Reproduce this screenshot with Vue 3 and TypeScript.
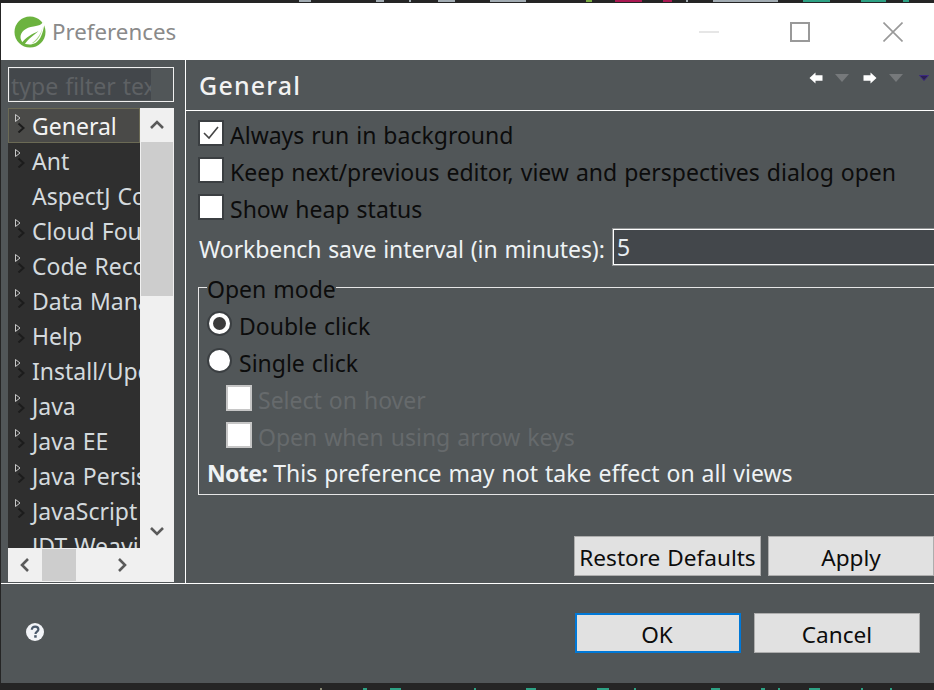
<script setup lang="ts">
const treeItems: { label: string; arrow: boolean; selected?: boolean }[] = [
  { label: 'General', arrow: true, selected: true },
  { label: 'Ant', arrow: true },
  { label: 'AspectJ Compiler', arrow: false },
  { label: 'Cloud Foundry', arrow: true },
  { label: 'Code Recommenders', arrow: true },
  { label: 'Data Management', arrow: true },
  { label: 'Help', arrow: true },
  { label: 'Install/Update', arrow: true },
  { label: 'Java', arrow: true },
  { label: 'Java EE', arrow: true },
  { label: 'Java Persistence', arrow: true },
  { label: 'JavaScript', arrow: true },
  { label: 'JDT Weaving', arrow: false },
]

// Fragments of the window behind the dialog that peek out above and below it: [start x, end x, colour]
type Bit = [number, number, string]
const toStyles = (bits: Bit[]) => {
  let cursor = 0
  return bits.map(([from, to, color]) => {
    const style = { marginLeft: `${from - cursor}px`, width: `${to - from}px`, background: color }
    cursor = to
    return style
  })
}
const light = '#b9c4cc'
const teal = '#2fb795'
const pink = '#c2185b'
const topBits = toStyles([
  [299, 311, light], [376, 384, light], [409, 411, light], [438, 455, light], [490, 526, light],
  [586, 592, '#8bc34a'], [615, 642, pink], [663, 672, pink], [686, 688, light], [713, 778, light],
  [803, 830, teal], [861, 886, teal], [903, 909, teal],
])
const bottomBits = toStyles([
  [320, 322, '#9a9a80'], [363, 367, teal], [390, 401, teal], [474, 476, teal], [526, 536, teal],
  [597, 609, teal], [634, 636, teal], [711, 720, teal], [761, 765, teal], [778, 780, teal],
  [809, 820, teal], [861, 863, teal], [890, 892, teal],
])
</script>

<template>
  <div class="screen">
    <div class="top-strip">
      <i v-for="(bit, i) in topBits" :key="i" class="bit" :style="bit"></i>
    </div>
    <div class="dialog">
      <header class="titlebar">
        <svg class="logo" width="33" height="32" viewBox="0 0 32 32">
          <circle cx="15.5" cy="16" r="15.5" fill="#6cb33f" />
          <path d="M30.5 1 C29 8 26 9.5 19 10.5 C11 11.5 6 16 6 21 C6 25 9 28.5 15 28.5 C24 28.5 29.5 20 30.5 1 Z" fill="#fff" />
          <path d="M7 27.5 C11 21 18 18 24 15 C19 19.5 14 22.5 10 28.5 Z" fill="#6cb33f" />
          <path d="M29 4 C28.5 13 26 21 17 27.5 C23 26 28 19 29 4 Z" fill="#a5d67f" />
        </svg>
        <span class="title">Preferences</span>
        <div class="window-controls">
          <span class="minimize"></span>
          <span class="maximize"></span>
          <svg class="close" width="20" height="20" viewBox="0 0 20 20">
            <path d="M0.5 0.5 L19.5 19.5 M19.5 0.5 L0.5 19.5" stroke="#999" stroke-width="1.6" fill="none" />
          </svg>
        </div>
      </header>

      <div class="main">
        <aside class="sidebar">
          <div class="filter"><span class="filter-fill"><span class="filter-text">type filter text</span></span></div>
          <div class="tree">
            <div class="tree-top">
              <ul class="tree-list">
                <li v-for="item in treeItems" :key="item.label" class="tree-row" :class="{ selected: item.selected }">
                  <svg v-if="item.arrow" class="twisty" width="12" height="19" viewBox="0 0 12 19">
                    <path d="M0.5 0.5 L5 4 L0.5 7.5 Z" fill="none" stroke="#c8c8c8" stroke-width="1" />
                    <path d="M3.5 9.5 L8.5 14 L3.5 18.5" fill="none" stroke="#1c1c1c" stroke-width="2" />
                  </svg>
                  <span class="tree-label">{{ item.label }}</span>
                </li>
              </ul>
              <div class="vscroll">
                <div class="scroll-btn">
                  <svg width="14" height="10" viewBox="0 0 14 10"><path d="M1 8 L7 2 L13 8" fill="none" stroke="#5a5a5a" stroke-width="2.6" /></svg>
                </div>
                <div class="vthumb"></div>
                <div class="vspace"></div>
                <div class="scroll-btn down">
                  <svg width="14" height="10" viewBox="0 0 14 10"><path d="M1 2 L7 8 L13 2" fill="none" stroke="#5a5a5a" stroke-width="2.6" /></svg>
                </div>
              </div>
            </div>
            <div class="hscroll">
              <div class="hbtn">
                <svg width="10" height="14" viewBox="0 0 10 14"><path d="M8 1 L2 7 L8 13" fill="none" stroke="#5a5a5a" stroke-width="2.6" /></svg>
              </div>
              <div class="hthumb"></div>
              <div class="hbtn right">
                <svg width="10" height="14" viewBox="0 0 10 14"><path d="M2 1 L8 7 L2 13" fill="none" stroke="#5a5a5a" stroke-width="2.6" /></svg>
              </div>
            </div>
          </div>
        </aside>

        <section class="pane">
          <div class="pane-head">
            <h1 class="pane-title">General</h1>
            <div class="nav-icons">
              <svg width="14" height="12" viewBox="0 0 14 12"><path d="M0.5 6 L6.5 0.5 L6.5 3.2 L13.5 3.2 L13.5 8.8 L6.5 8.8 L6.5 11.5 Z" fill="#fff" /></svg>
              <svg class="tri" width="14" height="8" viewBox="0 0 14 8"><path d="M0 0 H14 L7 8 Z" fill="#76797b" /></svg>
              <svg class="next" width="14" height="12" viewBox="0 0 14 12"><path d="M13.5 6 L7.5 0.5 L7.5 3.2 L0.5 3.2 L0.5 8.8 L7.5 8.8 L7.5 11.5 Z" fill="#fff" /></svg>
              <svg class="tri" width="14" height="8" viewBox="0 0 14 8"><path d="M0 0 H14 L7 8 Z" fill="#76797b" /></svg>
              <svg class="menu" width="10" height="6" viewBox="0 0 10 6"><path d="M0.5 0.5 H9.5 L5 5.5 Z" fill="#2b2050" stroke="#3d2a80" /></svg>
            </div>
          </div>

          <div class="pane-body">
            <label class="check-row">
              <span class="box">
                <svg width="20" height="20" viewBox="0 0 20 20"><path d="M3 10 L8 15 L17 4" fill="none" stroke="#454545" stroke-width="1.6" /></svg>
              </span>
              <span class="row-text">Always run in background</span>
            </label>
            <label class="check-row"><span class="box"></span><span class="row-text">Keep next/previous editor, view and perspectives dialog open</span></label>
            <label class="check-row"><span class="box"></span><span class="row-text">Show heap status</span></label>

            <div class="interval">
              <span class="interval-label">Workbench save interval (in minutes):</span>
              <div class="interval-input">5</div>
            </div>

            <fieldset class="group">
              <legend class="legend">Open mode</legend>
              <label class="radio-row"><span class="radio on"></span><span class="row-text">Double click</span></label>
              <label class="radio-row"><span class="radio"></span><span class="row-text">Single click</span></label>
              <label class="sub-row"><span class="box disabled"></span><span class="row-text">Select on hover</span></label>
              <label class="sub-row"><span class="box disabled"></span><span class="row-text">Open when using arrow keys</span></label>
              <p class="note"><b>Note:</b> This preference may not take effect on all views</p>
            </fieldset>

            <div class="pane-actions">
              <button class="btn restore">Restore Defaults</button>
              <button class="btn apply">Apply</button>
            </div>
          </div>
        </section>
      </div>

      <footer class="footer">
        <svg class="help" width="18" height="18" viewBox="0 0 18 18">
          <circle cx="9" cy="9" r="9" fill="#f2f4f8" />
          <path d="M5.8 6.8 C5.8 4.6 7.4 3.6 9.1 3.6 C11 3.6 12.4 4.7 12.4 6.5 C12.4 8.6 9.5 8.8 9.5 11" fill="none" stroke="#4b5a6c" stroke-width="2.2" />
          <rect x="8.2" y="12.2" width="2.5" height="2.5" fill="#4b5a6c" />
        </svg>
        <div class="footer-actions">
          <button class="btn ok">OK</button>
          <button class="btn cancel">Cancel</button>
        </div>
      </footer>
    </div>
    <div class="bottom-strip">
      <i v-for="(bit, i) in bottomBits" :key="i" class="bit" :style="bit"></i>
    </div>
  </div>
</template>

<style>
html, body { margin: 0; background: #252525; }
</style>

<style scoped>
.screen {
  width: 934px;
  height: 690px;
  overflow: hidden;
  background: #252525;
  font-family: "Noto Sans", "Open Sans", sans-serif;
  font-size: 23px;
  word-spacing: 1px;
  color: #0c0c0c;
}
.top-strip { height: 3px; background: #252525; display: flex; align-items: flex-start; }
.bottom-strip { height: 7px; background: #252525; display: flex; align-items: flex-end; }
.bit { display: block; height: 2px; flex: none; opacity: 0.85; }
.dialog {
  width: 933px;
  height: 680px;
  margin-left: 1px;
  display: flex;
  flex-direction: column;
  background: #515658;
}
.titlebar {
  height: 57px;
  flex: none;
  background: #fff;
  display: flex;
  align-items: center;
  padding-left: 13px;
  box-sizing: border-box;
}
.logo { flex: none; margin-right: 5px; }
.title { color: #8a8a8a; font-size: 22.3px; }
.window-controls { margin-left: auto; display: flex; align-items: center; }
.minimize { width: 20px; height: 2px; background: #e6e6e6; margin-right: 71px; }
.maximize { width: 20px; height: 20px; box-sizing: border-box; border: 2px solid #999; margin-right: 73px; }
.close { margin-right: 31px; }

.main { height: 523px; flex: none; display: flex; border-bottom: 1px solid #fff; }
.sidebar { flex: none; border-right: 1px solid #fff; padding: 7px 11px 0 7px; width: 166px; }
.filter {
  height: 35px;
  box-sizing: border-box;
  border: 1px solid #f0f0f0;
  padding: 1px;
  background: #515658;
  margin-bottom: 6px;
  overflow: hidden;
}
.filter-fill { display: block; width: 141px; height: 100%; background: #43474b; overflow: hidden; white-space: nowrap; }
.filter-text { color: #5e6164; padding-left: 1px; line-height: 35px; }
.tree { width: 166px; height: 474px; overflow: hidden; background: #f0f0f0; }
.tree-top { display: flex; height: 440px; }
.tree-list { margin: 0; padding: 0; list-style: none; width: 132px; height: 440px; background: #2f2f2f; overflow: hidden; flex: none; }
.tree-row { height: 35px; box-sizing: border-box; display: flex; align-items: center; color: #d4dade; position: relative; white-space: nowrap; padding-left: 24px; overflow: hidden; }
.tree-row.selected { background: #4a4a48; border: 1px solid #6b6a55; padding-left: 23px; color: #f4f4f4; }
.twisty { position: absolute; left: 7px; top: 6px; }
.tree-row.selected .twisty { left: 6px; top: 5px; }
.vscroll { width: 34px; display: flex; flex-direction: column; background: #f0f0f0; }
.scroll-btn { height: 34px; display: flex; align-items: center; justify-content: center; flex: none; }
.vthumb { height: 154px; margin: 0 1px; background: #cdcdcd; flex: none; }
.vspace { flex: 1; }
.hscroll { height: 34px; display: flex; align-items: center; background: #f0f0f0; }
.hbtn { width: 34px; height: 34px; display: flex; align-items: center; justify-content: center; flex: none; }
.hthumb { width: 34px; height: 32px; background: #cdcdcd; flex: none; }
.hbtn.right { margin-left: 29px; }

.pane { flex: 1; min-width: 0; display: flex; flex-direction: column; }
.pane-head { height: 50px; flex: none; border-bottom: 1px solid #fff; display: flex; }
.pane-title { margin: 0; padding: 8px 0 0 13px; font-size: 25px; font-weight: 500; color: #f2f2f2; line-height: 34px; letter-spacing: 1.2px; }
.nav-icons { margin-left: auto; display: flex; align-items: center; height: 36px; padding-right: 5px; }
.tri { margin-left: 12px; }
.next { margin-left: 14px; }
.menu { margin-left: 16px; }
.pane-body { flex: 1; padding: 3px 0 0 12px; }
.check-row { display: flex; align-items: center; height: 37px; }
.check-row .box { margin-right: 6px; }
.row-text { padding-top: 5px; }
.box {
  width: 26px;
  height: 26px;
  box-sizing: border-box;
  border: 2px solid #3b3f42;
  background: #fff;
  display: flex;
  align-items: center;
  justify-content: center;
  flex: none;
}
.box.disabled { border-color: #c6c6c6; margin-right: 6px; }
.interval { display: flex; align-items: center; height: 38px; margin-top: 3px; }
.interval-label { flex: none; box-sizing: border-box; width: 414px; padding: 3px 0 0 1px; color: #eef2f4; letter-spacing: -0.1px; white-space: nowrap; }
.interval-input {
  flex: 1;
  height: 38px;
  box-sizing: border-box;
  border: 1px solid #8e9192;
  border-right: 0;
  box-shadow: inset 1px 1px 0 #fff, inset 0 -1px 0 #fff;
  background: #43474b;
  color: #e8eef2;
  line-height: 36px;
  padding-left: 4px;
}
.group { margin: 8px 0 0 0; padding: 5px 0 0 8px; border: 1px solid #e6e6e6; border-right: 0; height: 221px; box-sizing: border-box; display: block; min-width: 0; }
.legend { padding: 4px 0 0 0; margin-left: 0; line-height: 22px; color: #0c0c0c; }
.radio-row { display: flex; align-items: center; height: 37px; }
.radio { width: 25px; height: 25px; box-sizing: border-box; border-radius: 50%; border: 2px solid #3b3f42; background: #fff; margin-right: 7px; flex: none; position: relative; }
.radio.on::after { content: ""; position: absolute; inset: 4px; border-radius: 50%; background: #3b3b3b; }
.sub-row { display: flex; align-items: center; height: 37px; padding-left: 19px; color: #666a6c; }
.note { margin: 0; height: 37px; line-height: 40px; color: #eef2f4; }
.note b { font-weight: 700; letter-spacing: -0.6px; margin-right: -1px; }
.pane-actions { display: flex; margin-top: 41px; margin-left: 376px; }
.btn {
  font: inherit;
  font-size: 22.6px;
  word-spacing: inherit;
  color: #0c0c0c;
  background: #e1e1e1;
  border: 1px solid #adadad;
  height: 40px;
  padding: 2px 0 0;
  box-sizing: border-box;
  flex: none;
}
.restore { width: 187px; margin-right: 7px; }
.apply { width: 166px; }

.footer { flex: 1; display: flex; align-items: flex-start; }
.help { margin: 39px 0 0 25px; }
.footer-actions { margin-left: auto; display: flex; margin-top: 29px; margin-right: 14px; }
.ok { width: 166px; border: 2px solid #0078d7; margin-right: 13px; padding-right: 2px; }
.cancel { width: 166px; }
</style>
